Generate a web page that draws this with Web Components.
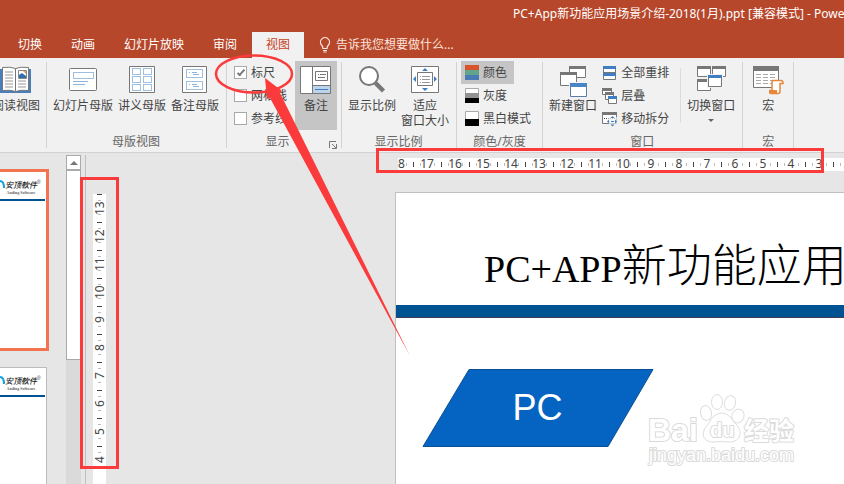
<!DOCTYPE html>
<html lang="zh-CN">
<head>
<meta charset="utf-8">
<title>PC+App新功能应用场景介绍-2018(1月).ppt</title>
<style>
html,body{margin:0;height:100%}
body{font:12px/16px "Noto Sans","Noto Sans CJK SC",sans-serif;color:#444;overflow:hidden}
</style>
</head>
<body>
<ppt-app></ppt-app>
<script>
const define = (name, html, setup) => customElements.define(name, class extends HTMLElement {
  connectedCallback() {
    if (this.shadowRoot) return;
    const t = document.createElement('template');
    t.innerHTML = typeof html === 'function' ? html(this) : html;
    this.attachShadow({mode: 'open'}).append(t.content.cloneNode(true));
    if (setup) setup(this);
  }
});

const win = (x, y, w, h, c = '#777') => `<path d="M${x} ${y}h${w}v${h}h-${w}z" fill="#fff"/><path d="M${x+.5} ${y+.5}h${w-1}v${h-1}h-${w-1}z" fill="none" stroke="${c}"/><path d="M${x} ${y}h${w}v3h-${w}z" fill="${c}"/>`;
const icons = {
  book: [32,32,`<path d="M0 4h31v24H0z" fill="#4a7ebb"/><path d="M2.500 2.500q8-1 13 1 5-2 13-1v23q-8-1-13 1-5-2-13-1z" fill="#fff" stroke="#777"/><path d="M15.500 3.500v23" stroke="#777"/><path d="M5 7h8M5 10h8M5 13h8M5 16h8M5 19h8M5 22h8M18 16h8M18 19h8M18 22h8" stroke="#999"/><path d="M18.500 5.500h8v8h-8z" fill="#fff" stroke="#888"/><path d="M19 13v-3l3-2 4 3v2z" fill="#2f6fb0"/><path d="M23 6h3v3z" fill="#f09a4a"/>`],
  slideMaster: [32,32,`<rect x="2.500" y="3.500" width="27" height="22" rx="1" fill="#fff" stroke="#777"/><path d="M6.500 7.500h20v6h-20z" fill="none" stroke="#3f7ec2" stroke-dasharray="1 1"/><path d="M6 16.500h15M6 19.500h12" stroke="#8db3dc"/>`],
  handout: [32,32,`<path d="M3.500 1.500h25v26h-25z" fill="#fff" stroke="#777"/><path d="M6.500 3.500h8v6h-8zM17.500 3.500h8v6h-8zM6.500 11.500h8v6h-8zM17.500 11.500h8v6h-8zM6.500 19.500h8v6h-8zM17.500 19.500h8v6h-8z" fill="none" stroke="#3f7ec2" stroke-dasharray="1 1"/>`],
  notesMaster: [32,32,`<path d="M3.500 1.500h24v26h-24z" fill="#fff" stroke="#777"/><path d="M7.500 4.500h16v8h-16zM7.500 16.500h16v8h-16z" fill="none" stroke="#3f7ec2" stroke-dasharray="1 1"/><path d="M10 7.500h1M13 7.500h5M14 9.500h6M10 19.500h1M13 19.500h5M14 21.500h6" stroke="#8db3dc"/>`],
  notes: [32,32,`<path d="M.500 1.500h30v27H.500z" fill="#fff" stroke="#777"/><path d="M13 21h17v7H13z" fill="#bdd3ec"/><path d="M12.500 2v27M13 20.500h17" stroke="#777"/><path d="M15.500 6.500h12v9h-12z" fill="#fff" stroke="#777"/><path d="M18 9.500h1M20 9.500h6M18 12.500h7" stroke="#777"/><path d="M15 24.500h13" stroke="#3f7ec2"/>`],
  zoom: [32,32,`<circle cx="13" cy="11" r="9" fill="#fff" stroke="#777" stroke-width="2"/><path d="M19.500 18l8 8" stroke="#777" stroke-width="4.500"/>`],
  fit: [32,32,`<path d="M2.500 1.500h27v26h-27z" fill="#fff" stroke="#777"/><path d="M8.500 7.500h15v13h-15z" fill="none" stroke="#777"/><path d="M11 11.500h1M13 11.500h8M11 14.500h1M13 14.500h8M11 17.500h1M13 17.500h8" stroke="#999"/><path d="M16 3l3 3h-6zM16 26l3-3h-6zM4 14l3-3v6zM28 14l-3-3v6z" fill="#3f7ec2"/>`],
  newWin: [32,32,win(12,1,17,12)+win(3,7,17,14)+`<path d="M12 17h18v15H12z" fill="#f1f1f1"/>`+win(13,18,17,14,'#5b7ea8')+`<path d="M13 18h17v4H13z" fill="#4a86c5"/>`],
  arrange: [15,16,win(1,1,13,14)+`<path d="M1 1h13v3H1zM1 8h13v3H1z" fill="#3f7ec2"/><path d="M1 7.500h13" stroke="#777"/>`],
  cascade: [15,16,win(0,0,10,7)+win(3,4,9,8)+win(6,8,9,8)+`<path d="M6 8h9v3H6z" fill="#3f7ec2"/>`],
  split: [15,16,`<path d="M.500 2.500h14v10H.500z" fill="#fff" stroke="#777"/><path d="M0 1h15v3H0z" fill="#777"/><path d="M2 7.500h12" stroke="#444" stroke-dasharray="1 1"/><path d="M6 6h9v10H7z" fill="#f1f1f1" opacity=".7"/><path d="M10.500 5l2 2h-4zM10.500 15.500l2-2h-4zM5 10.500l2-2v4zM15 10.500l-2-2v4zM9 10h3v1H9z" fill="#3f7ec2"/>`],
  switchWin: [32,32,win(2,1,14,11)+win(17,1,14,11)+win(2,14,14,12)+`<path d="M12 9h16v14H12z" fill="#f1f1f1"/>`+win(13,10,14,12)+`<path d="M13 10h14v3H13z" fill="#3f7ec2"/>`],
  macro: [32,32,`<path d="M1.500 2.500h25v20h-25z" fill="#fff" stroke="#777"/><path d="M1 1h26v5H1z" fill="#777"/><path d="M4 9.500h20M4 12.500h20M4 15.500h20M4 18.500h20" stroke="#aaa" stroke-dasharray="5 2"/><path d="M20 15.500h9q2 0 2 3h-3v8q0 2-2 2h-7q-2 0-1-3h2v-8q0-2 2-2" fill="#fff" stroke="#e8873a" stroke-width="1.500"/><path d="M17 25h8v3h-8z" fill="#e8873a"/>`],
  color: [14,16,`<path d="M0 0h14v5H0z" fill="#d9532c"/><path d="M0 5h14v5H0z" fill="#62a58c"/><path d="M0 10h14v5H0z" fill="#4a7ab5"/>`],
  gray: [14,16,`<path d="M.500.500h13v14H.500z" fill="#fff" stroke="#aaa"/><path d="M0 5h14v5H0z" fill="#929292"/><path d="M0 10h14v5H0z" fill="#000"/>`],
  bw: [14,16,`<path d="M.500.500h13v14H.500z" fill="#fff" stroke="#aaa"/><path d="M0 8h14v7H0z" fill="#000"/>`],
  bulb: [12,16,`<path d="M4 11.500q0-2-1.500-3.500a4.500 4.500 0 1 1 7 0Q8 9.500 8 11.500zM4 13.500h4M4.500 15h3" fill="none" stroke="#fbe9e3" stroke-width="1.200"/>`]
};
define('ui-icon', el => { const [w,h,s] = icons[el.getAttribute('name')];
  return `<style>:host{display:block;flex:none}svg{display:block}</style><svg width="${w}" height="${h}" viewBox="0 0 ${w} ${h}" aria-hidden="true">${s}</svg>`; });

const btn = 'button{font:inherit;color:inherit;background:none;border:0;margin:0;padding:0}';

define('app-header', `<style>
:host{display:grid;grid-template-rows:32px 26px;background:#b7472a;color:#fff;overflow:hidden}
.title{padding:6px 0 0 513px;white-space:nowrap}
nav{display:flex;gap:1px;padding-left:4px}
${btn} button{padding:0 14px;white-space:nowrap;line-height:24px}
.on{background:#f1f1f1;color:#c8401d}
.tell{display:flex;align-items:center;gap:5px;color:#fbe3dc}
</style><div class="title">PC+App新功能应用场景介绍-2018(1月).ppt [兼容模式] - PowerPoint</div>
<nav><button>切换</button><button>动画</button><button>幻灯片放映</button><button>审阅</button><button class="on">视图</button><button class="tell"><ui-icon name="bulb"></ui-icon>告诉我您想要做什么...</button></nav>`);

define('ribbon-group', el => `<style>
:host{display:grid;grid-template:69px 24px / minmax(0,auto);padding:3px 8px 0 6px;background:linear-gradient(#d2d2d2,#d2d2d2) right 4px/1px 86px no-repeat;flex:none;position:relative}
:host([clip]){width:40px;padding:3px 7px 0 0;grid-template-columns:40px}
:host([clip]) .body{justify-content:flex-end}
.body{display:flex;gap:5px}
.label{text-align:center;line-height:24px;color:#666;white-space:nowrap}
:host([launcher]) .label{padding-right:16px}
${btn} button{position:absolute;right:5px;bottom:3px;width:8px;height:8px}svg{display:block}
</style><div class="body"><slot></slot></div><div class="label">${el.getAttribute('label') || ''}</div>
${el.hasAttribute('launcher') ? '<button aria-label="显示设置"><svg width="8" height="8"><path d="M.500 7V.500H7M3 3l4 4M7.500 3v4.500H3" fill="none" stroke="#777"/></svg></button>' : ''}`);

define('big-button', el => `<style>
:host{display:block;flex:none}${btn}
button{display:flex;flex-direction:column;align-items:center;gap:1px;padding-top:4px;height:69px;min-width:48px;line-height:15px;white-space:nowrap;width:100%}
:host([pressed]) button{background:#c5c5c5;min-width:42px}
i{margin-top:5px;border:3px solid transparent;border-top-color:#666;border-bottom:0}
</style><button><ui-icon name="${el.getAttribute('icon')}"></ui-icon><span><slot></slot></span>${el.hasAttribute('menu') ? '<i></i>' : ''}</button>`);

define('small-button', el => `<style>
:host{display:block}${btn}
button{display:flex;align-items:center;gap:4px;height:23px;white-space:nowrap}
:host([swatch]) button{padding:0 7px 0 4px}
:host([pressed]) button{background:#c5c5c5}
</style><button><ui-icon name="${el.getAttribute('icon')}"></ui-icon><slot></slot></button>`);

define('check-row', el => `<style>
:host{display:block}
label{display:flex;align-items:center;gap:4px;height:23px;white-space:nowrap}
input{appearance:none;box-sizing:border-box;width:13px;height:13px;margin:0;background:#fff;border:1px solid #aaa;display:grid;place-items:center}
input:checked::before{content:"";width:6px;height:2px;border:solid #777;border-width:0 0 2px 2px;transform:translateY(-1px) rotate(-48deg)}
</style><label><input type="checkbox" ${el.hasAttribute('checked') ? 'checked' : ''}><slot></slot></label>`);

define('ribbon-bar', `<style>
:host{display:flex;background:#f1f1f1;border-bottom:1px solid #d2d2d2;height:94px;overflow:hidden}
.rule{width:1px;height:55px;margin:7px 1px 0 6px;background:#dcdcdc}
.show{padding-left:7px;padding-right:5px}
.checks{margin-right:3px}
.color{padding-left:4px;padding-right:5px}
.macro{padding-left:1px;padding-right:2px}
</style>
<ribbon-group clip><big-button icon="book">阅读视图</big-button></ribbon-group>
<ribbon-group label="母版视图"><big-button icon="slideMaster">幻灯片母版</big-button><big-button icon="handout">讲义母版</big-button><big-button icon="notesMaster">备注母版</big-button></ribbon-group>
<ribbon-group class="show" label="显示" launcher><div class="checks"><check-row checked>标尺</check-row><check-row>网格线</check-row><check-row>参考线</check-row></div><big-button icon="notes" pressed>备注</big-button></ribbon-group>
<ribbon-group label="显示比例"><big-button icon="zoom">显示比例</big-button><big-button icon="fit">适应<br>窗口大小</big-button></ribbon-group>
<ribbon-group class="color" label="颜色/灰度"><div><small-button icon="color" swatch pressed style="width:fit-content">颜色</small-button><small-button icon="gray" swatch>灰度</small-button><small-button icon="bw" swatch>黑白模式</small-button></div></ribbon-group>
<ribbon-group label="窗口"><big-button icon="newWin">新建窗口</big-button><div><small-button icon="arrange">全部重排</small-button><small-button icon="cascade">层叠</small-button><small-button icon="split">移动拆分</small-button></div><div class="rule"></div><big-button icon="switchWin" menu>切换窗口</big-button></ribbon-group>
<ribbon-group class="macro" label="宏"><big-button icon="macro">宏</big-button></ribbon-group>`);

define('slide-thumb', `<style>
:host{display:block;box-sizing:border-box;height:180px;background:#fff;border:1px solid #bbb;border-left:0;margin-right:19px;overflow:hidden}
:host([current]){height:182px;border:3px solid #f1734f;border-left:0;margin-right:17px}
.logo{display:flex;padding-top:8px;height:19px;border-bottom:2px solid #005393;margin-right:1px}
.name{font:italic 500 8px/10px "Noto Sans CJK SC",sans-serif;color:#222;text-align:center;white-space:nowrap}
small{display:block;font:bold 4px/5px "Liberation Serif",serif;color:#666}
sup{font:5px/5px "Liberation Sans",sans-serif}
</style><div class="logo"><svg width="5" height="10"><path d="M0 1q4 0 4 7" fill="none" stroke="#14a0e6" stroke-width="2"/></svg><div class="name">安顶軟件<small>Anding Software</small></div><sup>®</sup></div>`);

define('scroll-bar', `<style>
:host{display:flex;flex-direction:column;background:#dadada}
${btn} button{box-sizing:border-box;height:15px;background:#fff;border:1px solid #aaa;display:grid;place-items:center}
i{border:4px solid transparent;border-bottom-color:#777;border-top:0}
.grip{box-sizing:border-box;flex:0 0 190px;background:#fff;border:1px solid #aaa}
</style><button aria-label="向上滚动"><i></i></button><div class="grip"></div>`);

define('page-ruler', el => { const [a,b] = el.getAttribute('range').split(' ').map(Number);
  const cells = []; for (let n = a; n >= b; n--) cells.push(`<span>${n}</span>`);
  return `<style>
:host{display:flex;background:#fff;overflow:hidden;font-size:12px;line-height:12px;color:#444;--t:linear-gradient(#444,#444);--q:linear-gradient(#bbb,#bbb)}
span{flex:none;width:28px;text-align:center;background:var(--t) 0 4px/1px 5px no-repeat,var(--q) 7px 5px/1px 3px no-repeat,var(--q) 21px 5px/1px 3px no-repeat}
.part{width:15px;text-align:left;background:var(--q) 8px 5px/1px 3px no-repeat}
:host([vertical]){flex-direction:column}
:host([vertical]) span{line-height:13px;width:13px;height:28px;writing-mode:vertical-rl;transform:rotate(180deg);background:var(--t) 4px 27px/5px 1px no-repeat,var(--q) 5px 7px/3px 1px no-repeat,var(--q) 5px 21px/3px 1px no-repeat}
</style>${el.hasAttribute('lead') ? `<span class="part">${el.getAttribute('lead')}</span>` : ''}${cells.join('')}`; });

define('water-mark', `<style>:host{display:block}svg{display:block}text{fill:#fff;stroke:#dadada;stroke-width:2px;paint-order:stroke;stroke-linejoin:round}</style>
<svg width="156" height="80" viewBox="0 0 156 80"><g fill="#fff" stroke="#dedede">
<ellipse cx="60" cy="22" rx="5.500" ry="7.500" transform="rotate(-12 60 22)"/><ellipse cx="71" cy="11" rx="5.500" ry="7.500"/><ellipse cx="84" cy="12" rx="5.500" ry="7.500" transform="rotate(12 84 12)"/><ellipse cx="92" cy="25" rx="6" ry="7" transform="rotate(20 92 25)"/>
<path d="M75 22q8 0 13 9 7 6 6 13-2 7-11 7-8-1-16 0-9 0-10-8 0-5 6-11 4-9 12-10z"/></g>
<text x="2" y="50" style="font:bold 32px 'Liberation Sans',sans-serif">Bai</text><text x="64" y="46" style="font:bold 20px 'Liberation Sans',sans-serif">du</text><text x="98" y="49" style="font:bold 25px 'Noto Sans CJK SC',sans-serif">经验</text><text x="3" y="70" style="font:18px 'Liberation Sans',sans-serif">jingyan.baidu.com</text></svg>`);

define('slide-page', `<style>
:host{display:block;background:#fff;border:solid #c0c0c0;border-width:1px 0 0 1px;overflow:hidden;position:relative;color:#000}
h1{margin:0;padding:38px 0 0 88px;height:74px;font:300 45px/64px "Noto Sans CJK SC",sans-serif;white-space:nowrap}
h1 span{font-family:"Liberation Serif",serif;font-size:38px;font-weight:400}
.band{height:12px;background:#005393;border-bottom:1px solid #443c50}
.shape{position:absolute;left:25px;top:175px;width:234px;height:80px}
.shape text{font:36px "Liberation Sans",sans-serif;fill:#fff}
water-mark{position:absolute;left:250px;top:198px}
</style><h1><span>PC+APP</span>新功能应用场景介绍</h1><div class="band"></div>
<svg class="shape" viewBox="0 0 234 80"><path d="M48 1.500h184L187 78.500H2z" fill="#0563c1" stroke="#0b4f94"/><text x="116.500" y="52" text-anchor="middle">PC</text></svg>
<water-mark></water-mark>`);

define('work-area', `<style>
:host{display:grid;grid-template-columns:66px 15px 4px 1px minmax(0,1fr);background:#e6e6e6;overflow:hidden}
.thumbs{padding-top:16px;display:flex;flex-direction:column;gap:16px;overflow:hidden}
slide-thumb{flex:none}
scroll-bar,.line{margin-top:2px}
.line{grid-column:4;background:#c0c0c0}
.canvas{display:grid;grid-template-columns:13px minmax(0,1fr);column-gap:289px;grid-template-rows:13px minmax(0,1fr);row-gap:21px;padding:5px 0 0 7px;min-height:0}
.h{grid-column:2;margin-left:3px}.v{margin-top:2px}
</style><div class="thumbs"><slide-thumb current></slide-thumb><slide-thumb></slide-thumb></div><scroll-bar></scroll-bar><div class="line"></div>
<div class="canvas"><page-ruler class="h" lead="8" range="17 2"></page-ruler><page-ruler class="v" vertical range="13 4"></page-ruler><slide-page></slide-page></div>`);

define('mark-layer', `<style>:host{position:absolute;left:0;top:0;pointer-events:none}svg{display:block}</style>
<svg width="844" height="484" fill="none" stroke="#fb3b3b"><ellipse cx="254" cy="74" rx="38" ry="18.500" stroke-width="2.500"/><path d="M377.500 149.500h445v22h-445zM81.500 178.500h36v289h-36z" stroke-width="3"/><path d="M265 78L267 99l3-1 139.500 257L280 93l2-2z" fill="#fb3b3b" stroke="none"/></svg>`);

define('ppt-app', `<style>:host{display:grid;grid-template-rows:auto auto minmax(0,1fr);height:100vh;position:relative;overflow:hidden}</style>
<app-header></app-header><ribbon-bar></ribbon-bar><work-area></work-area><mark-layer></mark-layer>`);
</script>
</body>
</html>
